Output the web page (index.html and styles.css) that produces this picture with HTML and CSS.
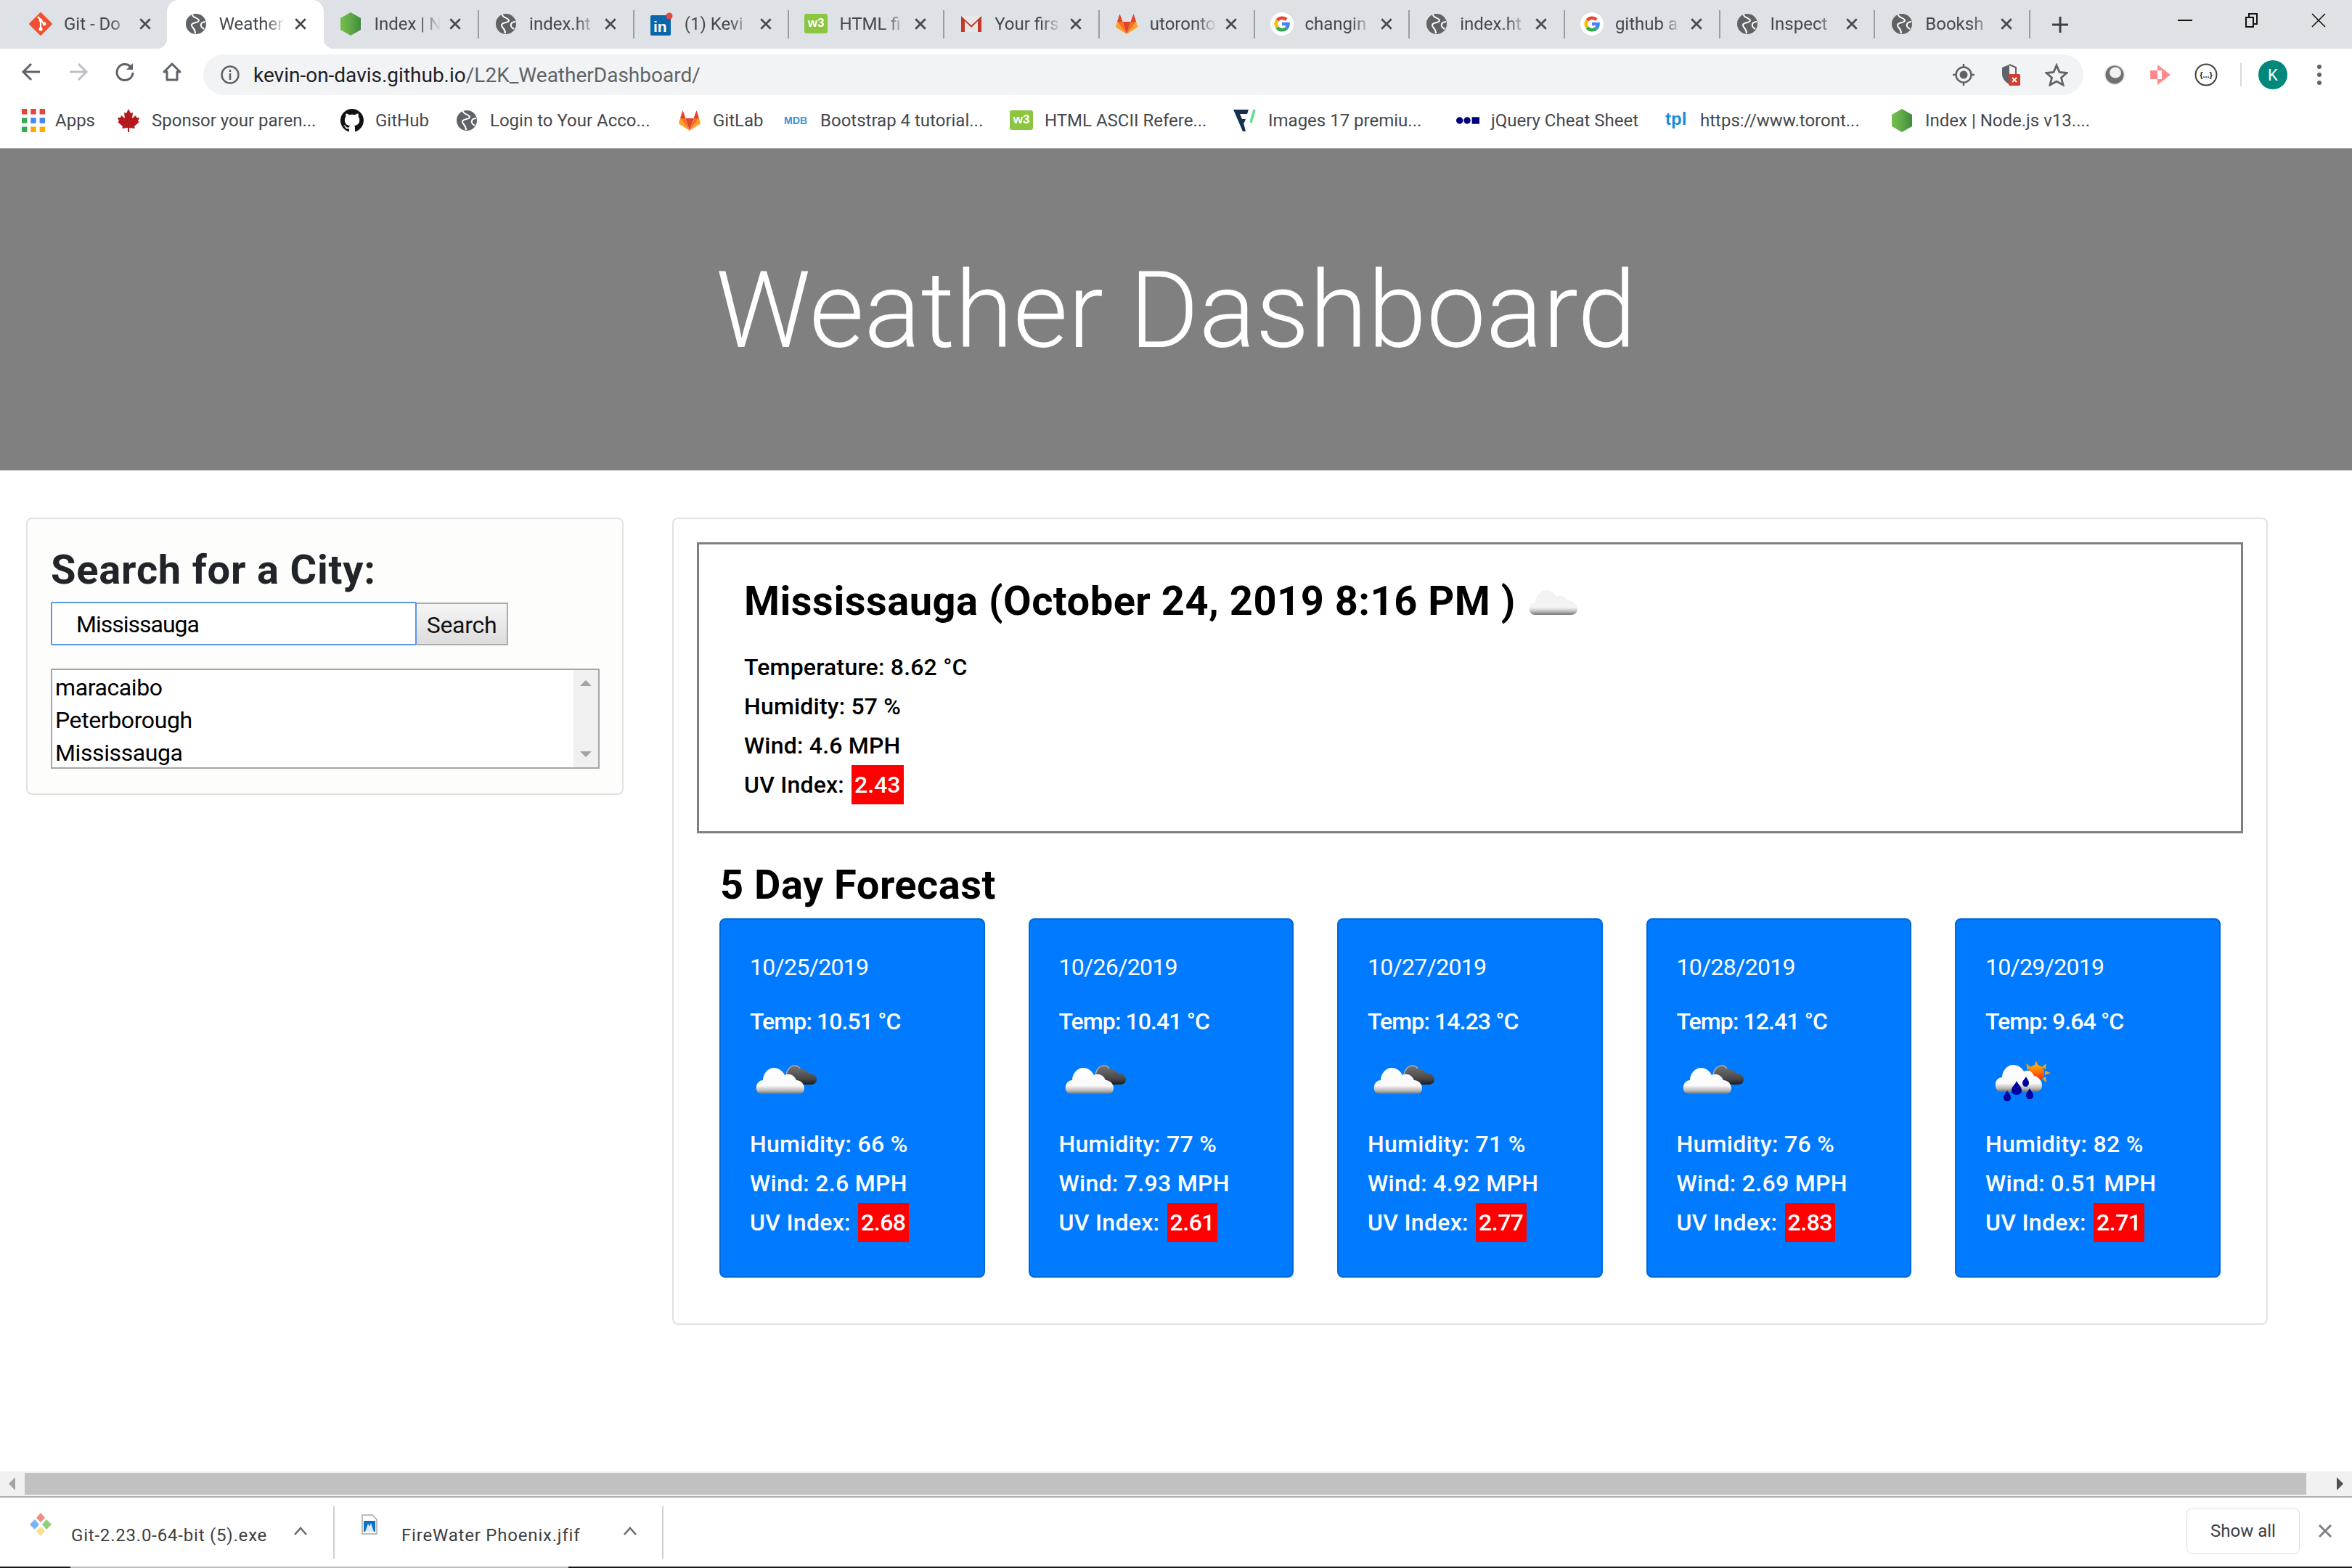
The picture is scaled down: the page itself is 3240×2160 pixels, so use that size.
FILE: index.html
```html
<!DOCTYPE html>
<html lang="en">
<head>
  <meta charset="UTF-8" />
  <title>Weather Dashboard</title>
  <link rel="stylesheet" href="styles.css">
</head>
<body>
  <svg class="sprites" xmlns="http://www.w3.org/2000/svg">
    <defs>
      <linearGradient id="white-cloud" x1="0" y1="0" x2="0" y2="1">
        <stop offset="0" stop-color="#fff" />
        <stop offset="0.68" stop-color="#fafafa" />
        <stop offset="0.88" stop-color="#b5b5b5" />
        <stop offset="1" stop-color="#6f6f6f" />
      </linearGradient>
      <linearGradient id="pale-cloud" x1="0" y1="0" x2="0" y2="1">
        <stop offset="0" stop-color="#f2f2f2" />
        <stop offset="0.7" stop-color="#f4f4f4" />
        <stop offset="0.84" stop-color="#c4c4c4" />
        <stop offset="1" stop-color="#777" />
      </linearGradient>
      <linearGradient id="dark-cloud" x1="0" y1="0" x2="0" y2="1">
        <stop offset="0" stop-color="#777" />
        <stop offset="0.7" stop-color="#484848" />
        <stop offset="1" stop-color="#1c1c1c" />
      </linearGradient>
      <linearGradient id="sun-fill" x1="0" y1="0" x2="0" y2="1">
        <stop offset="0" stop-color="#ffb000" />
        <stop offset="1" stop-color="#ff1c00" />
      </linearGradient>
      <linearGradient id="node-fill" x1="0" y1="0" x2="1" y2="0">
        <stop offset="0" stop-color="#76c04e" />
        <stop offset="0.55" stop-color="#5da646" />
        <stop offset="1" stop-color="#3c8a3c" />
      </linearGradient>
      <filter id="soft"><feGaussianBlur stdDeviation="0.7" /></filter>

      <symbol id="i-git" viewBox="0 0 32 32">
        <path d="M16 1 31 16 16 31 1 16Z" fill="#f05133" stroke="#f05133" stroke-width="2" stroke-linejoin="round" />
        <path d="M12 6 21 16M16 11V23" stroke="#fff" stroke-width="2.2" fill="none" />
        <circle cx="16" cy="23" r="2.6" fill="#fff" /><circle cx="16" cy="11" r="2.4" fill="#fff" /><circle cx="21" cy="16" r="2.4" fill="#fff" />
      </symbol>
      <symbol id="i-globe" viewBox="-2 -2 32 32">
        <circle cx="14" cy="14" r="14" fill="#5f6368" />
        <path d="M9 1C9 6 17 5 18 9 18 13 10 11 8 15 7 19 13 19 13 27M27 11C23 11 20 13 21 17 22 20 24 20 25 21" stroke="#fff" stroke-width="2" fill="none" />
      </symbol>
      <symbol id="i-node" viewBox="0 0 28 32">
        <path d="M14 0 28 8V24L14 32 0 24V8Z" fill="url(#node-fill)" />
      </symbol>
      <symbol id="i-linkedin" viewBox="0 0 32 32">
        <rect x="1" y="4" width="28" height="28" rx="2" fill="#0a66a8" />
        <text x="5" y="27" class="svg-in">in</text>
        <circle cx="27" cy="5" r="4.5" fill="#e0483f" />
      </symbol>
      <symbol id="i-w3" viewBox="0 0 32 28">
        <rect width="32" height="27" rx="3" fill="#8cc63f" />
        <text x="16" y="18" class="svg-w3">w3</text>
      </symbol>
      <symbol id="i-gmail" viewBox="0 0 32 24">
        <path d="M2 1H30V23H2Z" fill="#e8e8e8" />
        <path d="M2 1 16 14 30 1V23H25V8L16 17 7 8V23H2Z" fill="#c5392a" />
      </symbol>
      <symbol id="i-gitlab" viewBox="0 0 32 32">
        <path d="M16 30 10.5 13H21.5Z" fill="#e24329" />
        <path d="M16 30 10.5 13H3ZM16 30 21.5 13H29Z" fill="#fc6d26" />
        <path d="M3 13 1 19Q1 20.5 2 21L16 30ZM29 13 31 19Q31 20.5 30 21L16 30Z" fill="#fca326" />
        <path d="M3 13 6.5 2 10.5 13ZM29 13 25.500 2 21.500 13Z" fill="#e24329" />
      </symbol>
      <symbol id="i-google" viewBox="0 0 32 32">
        <circle cx="16" cy="16" r="16" fill="#fff" />
        <g fill="none" stroke-width="4.600">
          <path d="M9.500 11A8.500 8.500 0 0 1 22 10" stroke="#ea4335" />
          <path d="M9.500 11A8.500 8.500 0 0 0 9.500 21" stroke="#fbbc05" />
          <path d="M9.500 21A8.500 8.500 0 0 0 22 22" stroke="#34a853" />
          <path d="M22 22A8.500 8.500 0 0 0 24.500 16H16" stroke="#4285f4" />
        </g>
      </symbol>
      <symbol id="i-apps" viewBox="0 0 26 26">
        <path d="M0 0h6v6H0zM10 0h6v6h-6zM20 0h6v6h-6z" fill="#ea4335" />
        <path d="M0 10h6v6H0z" fill="#34a853" />
        <path d="M10 10h6v6h-6zM20 10h6v6h-6z" fill="#4285f4" />
        <path d="M0 20h6v6H0z" fill="#34a853" />
        <path d="M10 20h6v6h-6zM20 20h6v6h-6z" fill="#f9ab00" />
      </symbol>
      <symbol id="i-maple" viewBox="0 0 32 32">
        <path d="M16 0 19 6 22 5 21 13 26 9 27 12 31 12 29 17 31 18 24 24 25 27 17 26 17 32 15 32 15 26 7 27 8 24 1 18 3 17 1 12 5 12 6 9 11 13 10 5 13 6Z" fill="#b3191c" />
      </symbol>
      <symbol id="i-github" viewBox="0 0 16 16">
        <path fill="#111" d="M8 0C3.580 0 0 3.580 0 8c0 3.540 2.290 6.530 5.470 7.590.4.070.55-.17.55-.38 0-.19-.01-.82-.01-1.490-2.010.37-2.530-.49-2.690-.94-.09-.23-.48-.94-.82-1.130-.28-.15-.68-.52-.01-.53.63-.01 1.080.58 1.230.82.72 1.210 1.870.87 2.330.66.070-.52.28-.87.51-1.070-1.780-.2-3.640-.89-3.640-3.950 0-.87.31-1.590.82-2.150-.08-.2-.36-1.020.08-2.120 0 0 .67-.21 2.200.82.64-.18 1.320-.27 2-.27.68 0 1.360.09 2 .27 1.530-1.040 2.200-.82 2.200-.82.44 1.100.16 1.920.08 2.120.51.56.82 1.270.82 2.150 0 3.070-1.870 3.750-3.650 3.950.29.25.54.73.54 1.480 0 1.070-.01 1.930-.01 2.200 0 .21.15.46.55.38A8.013 8.013 0 0016 8c0-4.420-3.580-8-8-8z" />
      </symbol>
      <symbol id="i-f" viewBox="0 0 32 32">
        <path d="M0 1H21L19 7H9L12 14H17L15 19H14L17 31H13Z" fill="#17304d" />
        <path d="M29 1 24 19" stroke="#5ee28f" stroke-width="3.500" fill="none" />
      </symbol>
      <symbol id="i-close" viewBox="0 0 16 16">
        <path d="M2 2 14 14M14 2 2 14" stroke="#45484c" stroke-width="2.400" fill="none" />
      </symbol>
      <symbol id="i-caret" viewBox="0 0 20 14">
        <path d="M2 12 10 3 18 12" stroke="#6a6d70" stroke-width="2.600" fill="none" />
      </symbol>
    </defs>
  </svg>

  <header class="chrome">
    <div class="tabstrip">
      <div class="tab">
        <svg class="tab-icon"><use href="#i-git" /></svg>
        <span class="tab-title">Git - Do</span>
        <svg class="tab-close"><use href="#i-close" /></svg>
      </div>
      <div class="tab tab-active">
        <svg class="tab-icon"><use href="#i-globe" /></svg>
        <span class="tab-title">Weather</span>
        <svg class="tab-close"><use href="#i-close" /></svg>
      </div>
      <div class="tab tab-sep">
        <svg class="tab-icon"><use href="#i-node" /></svg>
        <span class="tab-title">Index | N</span>
        <svg class="tab-close"><use href="#i-close" /></svg>
      </div>
      <div class="tab tab-sep">
        <svg class="tab-icon"><use href="#i-globe" /></svg>
        <span class="tab-title">index.ht</span>
        <svg class="tab-close"><use href="#i-close" /></svg>
      </div>
      <div class="tab tab-sep">
        <svg class="tab-icon"><use href="#i-linkedin" /></svg>
        <span class="tab-title">(1) Kevi</span>
        <svg class="tab-close"><use href="#i-close" /></svg>
      </div>
      <div class="tab tab-sep">
        <svg class="tab-icon"><use href="#i-w3" /></svg>
        <span class="tab-title">HTML fi</span>
        <svg class="tab-close"><use href="#i-close" /></svg>
      </div>
      <div class="tab tab-sep">
        <svg class="tab-icon"><use href="#i-gmail" /></svg>
        <span class="tab-title">Your firs</span>
        <svg class="tab-close"><use href="#i-close" /></svg>
      </div>
      <div class="tab tab-sep">
        <svg class="tab-icon"><use href="#i-gitlab" /></svg>
        <span class="tab-title">utoronto</span>
        <svg class="tab-close"><use href="#i-close" /></svg>
      </div>
      <div class="tab tab-sep">
        <svg class="tab-icon"><use href="#i-google" /></svg>
        <span class="tab-title">changin</span>
        <svg class="tab-close"><use href="#i-close" /></svg>
      </div>
      <div class="tab tab-sep">
        <svg class="tab-icon"><use href="#i-globe" /></svg>
        <span class="tab-title">index.ht</span>
        <svg class="tab-close"><use href="#i-close" /></svg>
      </div>
      <div class="tab tab-sep">
        <svg class="tab-icon"><use href="#i-google" /></svg>
        <span class="tab-title">github a</span>
        <svg class="tab-close"><use href="#i-close" /></svg>
      </div>
      <div class="tab tab-sep">
        <svg class="tab-icon"><use href="#i-globe" /></svg>
        <span class="tab-title">Inspect</span>
        <svg class="tab-close"><use href="#i-close" /></svg>
      </div>
      <div class="tab tab-sep">
        <svg class="tab-icon"><use href="#i-globe" /></svg>
        <span class="tab-title">Booksh</span>
        <svg class="tab-close"><use href="#i-close" /></svg>
      </div>
      <svg class="new-tab" viewBox="0 0 24 24"><path d="M12 1V23M1 12H23" stroke="#3c4043" stroke-width="3" /></svg>
      <div class="window-controls">
        <svg class="win-btn" viewBox="0 0 20 20"><path d="M0 10H20" stroke="#111" stroke-width="2" /></svg>
        <svg class="win-btn" viewBox="0 0 20 20"><path d="M2 6H12V19H2ZM6 6V1H17V15H12" stroke="#111" stroke-width="2" fill="none" /></svg>
        <svg class="win-btn" viewBox="0 0 20 20"><path d="M1 1 19 19M19 1 1 19" stroke="#111" stroke-width="1.600" fill="none" /></svg>
      </div>
    </div>

    <div class="toolbar">
      <div class="nav-btn"><svg viewBox="0 0 28 28"><path d="M26 14H4M14 3 3 14 14 25" stroke="#5f6368" stroke-width="3" fill="none" /></svg></div>
      <div class="nav-btn"><svg viewBox="0 0 28 28"><path d="M2 14H24M14 3 25 14 14 25" stroke="#bdc1c6" stroke-width="3" fill="none" /></svg></div>
      <div class="nav-btn"><svg viewBox="0 0 28 28"><path d="M22 7A11 11 0 1 0 25 15" stroke="#5f6368" stroke-width="3" fill="none" /><path d="M25 2V11H16Z" fill="#5f6368" /></svg></div>
      <div class="nav-btn"><svg viewBox="0 0 28 28"><path d="M14 3 3 14H7V25H21V14H25Z" stroke="#5f6368" stroke-width="3" fill="none" stroke-linejoin="round" /></svg></div>
      <div class="omnibox">
        <svg class="omni-info" viewBox="0 0 26 26"><circle cx="13" cy="13" r="11.500" stroke="#5f6368" stroke-width="2.500" fill="none" /><path d="M13 11V20M13 6V9" stroke="#5f6368" stroke-width="2.500" /></svg>
        <span class="url">kevin-on-davis.github.io<span class="url-path">/L2K_WeatherDashboard/</span></span>
        <div class="omni-actions">
          <svg viewBox="0 0 32 32"><circle cx="16" cy="16" r="10.500" stroke="#5f6368" stroke-width="2.500" fill="none" /><circle cx="16" cy="16" r="5.500" fill="#5f6368" /><path d="M16 1V6M16 26V31M1 16H6M26 16H31" stroke="#5f6368" stroke-width="2.500" /></svg>
          <svg viewBox="0 0 32 32"><path d="M15 2 5 6V15C5 21 9 26 15 29Z" fill="#5f6368" /><path d="M15 2 24 6V15" stroke="#5f6368" stroke-width="2" fill="none" /><rect x="14" y="15" width="16" height="16" rx="2" fill="#d93a2f" /><path d="M19 20 25 26M25 20 19 26" stroke="#fff" stroke-width="2" /></svg>
          <svg viewBox="0 0 32 32"><path d="M16 3 20 12.500 30 13.500 22.500 20 25 30 16 25 7 30 9.500 20 2 13.500 12 12.500Z" stroke="#5f6368" stroke-width="2.800" fill="none" /></svg>
        </div>
      </div>
      <div class="extensions">
        <svg viewBox="0 0 32 32"><circle cx="16" cy="16" r="14" fill="#e4e4e4" /><circle cx="16" cy="16" r="12.500" fill="#707070" /><ellipse cx="17" cy="13" rx="8" ry="7.500" fill="#f2f2f2" /></svg>
        <svg viewBox="0 0 32 32"><path d="M2 10H12V2L30 16 12 30V22H2Z" fill="#ff8a8e" /><path d="M12 10H18V22H12Z" fill="#fff" /></svg>
        <svg viewBox="0 0 32 32"><circle cx="16" cy="16" r="14.500" stroke="#3c4043" stroke-width="2" fill="#fff" /><text x="16" y="20" class="svg-braces">{...}</text></svg>
      </div>
      <span class="toolbar-sep"></span>
      <span class="avatar">K</span>
      <svg class="menu-dots" viewBox="0 0 28 28"><circle cx="14" cy="3" r="3" fill="#5f6368" /><circle cx="14" cy="14" r="3" fill="#5f6368" /><circle cx="14" cy="25" r="3" fill="#5f6368" /></svg>
    </div>

    <nav class="bookmarks">
      <div class="bm bm-apps"><svg class="bm-icon"><use href="#i-apps" /></svg><span>Apps</span></div>
      <div class="bm"><svg class="bm-icon"><use href="#i-maple" /></svg><span>Sponsor your paren...</span></div>
      <div class="bm"><svg class="bm-icon"><use href="#i-github" /></svg><span>GitHub</span></div>
      <div class="bm"><svg class="bm-icon"><use href="#i-globe" /></svg><span>Login to Your Acco...</span></div>
      <div class="bm"><svg class="bm-icon"><use href="#i-gitlab" /></svg><span>GitLab</span></div>
      <div class="bm bm-mdb"><svg class="bm-icon" viewBox="0 0 34 14"><text x="0" y="12" class="svg-mdb">MDB</text></svg><span>Bootstrap 4 tutorial...</span></div>
      <div class="bm"><svg class="bm-icon"><use href="#i-w3" /></svg><span>HTML ASCII Refere...</span></div>
      <div class="bm"><svg class="bm-icon"><use href="#i-f" /></svg><span>Images 17 premiu...</span></div>
      <div class="bm"><svg class="bm-icon" viewBox="0 0 34 14"><circle cx="5" cy="7" r="5" fill="#00007f" /><circle cx="16" cy="7" r="5" fill="#00007f" /><rect x="23" y="2" width="11" height="10" fill="#00007f" /></svg><span>jQuery Cheat Sheet</span></div>
      <div class="bm"><svg class="bm-icon" viewBox="0 0 32 28"><text x="0" y="20" class="svg-tpl">tpl</text></svg><span>https://www.toront...</span></div>
      <div class="bm"><svg class="bm-icon"><use href="#i-node" /></svg><span>Index | Node.js v13....</span></div>
    </nav>
  </header>

  <main class="page">
    <div class="jumbotron">
      <h1>Weather Dashboard</h1>
    </div>

    <div class="content">
      <section class="search-card">
        <h3>Search for a City:</h3>
        <form class="search-form">
          <input class="search-input" type="text" value="Mississauga" />
          <button class="search-btn" type="button">Search</button>
        </form>
        <div class="city-list">
          <ul>
            <li>maracaibo</li>
            <li>Peterborough</li>
            <li>Mississauga</li>
          </ul>
          <div class="list-scroll"><span class="arrow-up"></span><span class="arrow-down"></span></div>
        </div>
      </section>

      <section class="weather-card">
        <div class="current">
          <h2>Mississauga (October 24, 2019 8:16 PM ) <svg class="current-icon" viewBox="0 0 68 38"><path filter="url(#soft)" fill="url(#pale-cloud)" d="M9 37C3 37 0 32 1 27 2 22 5 20 9 20 10 11 16 3 24 3 31 3 36 8 38 12 43 9 50 10 53 17 60 17 67 21 67 29 67 34 63 37 58 37Z" /></svg></h2>
          <p>Temperature: 8.62 °C</p>
          <p>Humidity: 57 %</p>
          <p>Wind: 4.6 MPH</p>
          <p>UV Index: <span class="uv">2.43</span></p>
        </div>

        <h2 class="forecast-title">5 Day Forecast</h2>
        <div class="forecast">
          <div class="day">
            <div class="day-date">10/25/2019</div>
            <p class="day-temp">Temp: 10.51 °C</p>
            <svg class="day-icon"><use href="#w-clouds" /></svg>
            <p>Humidity: 66 %</p>
            <p>Wind: 2.6 MPH</p>
            <p>UV Index: <span class="uv">2.68</span></p>
          </div>
          <div class="day">
            <div class="day-date">10/26/2019</div>
            <p class="day-temp">Temp: 10.41 °C</p>
            <svg class="day-icon"><use href="#w-clouds" /></svg>
            <p>Humidity: 77 %</p>
            <p>Wind: 7.93 MPH</p>
            <p>UV Index: <span class="uv">2.61</span></p>
          </div>
          <div class="day">
            <div class="day-date">10/27/2019</div>
            <p class="day-temp">Temp: 14.23 °C</p>
            <svg class="day-icon"><use href="#w-clouds" /></svg>
            <p>Humidity: 71 %</p>
            <p>Wind: 4.92 MPH</p>
            <p>UV Index: <span class="uv">2.77</span></p>
          </div>
          <div class="day">
            <div class="day-date">10/28/2019</div>
            <p class="day-temp">Temp: 12.41 °C</p>
            <svg class="day-icon"><use href="#w-clouds" /></svg>
            <p>Humidity: 76 %</p>
            <p>Wind: 2.69 MPH</p>
            <p>UV Index: <span class="uv">2.83</span></p>
          </div>
          <div class="day">
            <div class="day-date">10/29/2019</div>
            <p class="day-temp">Temp: 9.64 °C</p>
            <svg class="day-icon"><use href="#w-rain" /></svg>
            <p>Humidity: 82 %</p>
            <p>Wind: 0.51 MPH</p>
            <p>UV Index: <span class="uv">2.71</span></p>
          </div>
        </div>
      </section>
    </div>
  </main>

  <svg class="sprites" xmlns="http://www.w3.org/2000/svg">
    <defs>
      <symbol id="w-clouds" viewBox="0 0 100 100">
        <path filter="url(#soft)" fill="url(#dark-cloud)" d="M50 46C50 36 56 30 62 30 66 30 70 33 71 37 76 36 80 38 81 42 85 41 92 44 92 50 92 55 88 57 84 57H60Z" />
        <path filter="url(#soft)" d="M50 44C51 36 56 31 62 31 65 31 67 32 69 35" stroke="#a8a8a8" stroke-width="1.600" fill="none" />
        <path filter="url(#soft)" fill="url(#white-cloud)" d="M17 70C10 70 8 64 9 59 10 54 14 51 18 51 18 42 25 34 33 34 41 34 46 40 48 44 53 41 61 43 64 51 70 51 75 56 75 62 75 67 72 70 68 70Z" />
      </symbol>
      <symbol id="w-rain" viewBox="0 0 100 100">
        <g fill="#f0a020">
          <path d="M70 24 73 32H67ZM56 28 63 33 58 37ZM84 28 83 36 77 33ZM90 41 82 44V38ZM84 54 78 49 83 46Z" />
        </g>
        <circle cx="70" cy="41" r="11" fill="url(#sun-fill)" />
        <path filter="url(#soft)" fill="url(#white-cloud)" d="M22 67C15 67 13 60 14 55 15 50 19 47 23 47 23 38 30 30 38 30 46 30 51 35 53 39 58 36 64 38 67 45 73 46 78 52 78 58 78 64 74 67 70 67Z" />
        <circle cx="56" cy="53" r="7" fill="#fff" />
        <g fill="#00009c" filter="url(#soft)">
          <path d="M43 52C45 57 50 60 50 65 50 69 47 71 43 71 39 71 36 69 36 65 36 60 41 57 43 52Z" />
          <path d="M56 46C57 49 60 51 60 55 60 58 58 60 56 60 53 60 51 58 51 55 51 51 55 49 56 46Z" />
          <path d="M30 65C31 68 35 71 35 75 35 78 33 80 30 80 27 80 25 78 25 75 25 71 29 68 30 65Z" />
          <path d="M61 62C62 65 66 68 66 72 66 75 64 77 61 77 58 77 56 75 56 72 56 68 60 65 61 62Z" />
        </g>
      </symbol>
    </defs>
  </svg>

  <div class="hscroll">
    <span class="arrow-left"></span>
    <div class="hscroll-thumb"></div>
    <span class="arrow-right"></span>
  </div>

  <footer class="shelf">
    <div class="dl dl-first">
      <svg class="dl-icon" viewBox="0 0 32 32">
        <path d="M16 0 22 7 16 13 10 7Z" fill="#f28b82" />
        <path d="M8 9 14 16 8 23 1 16Z" fill="#7cb2f5" />
        <path d="M24 9 31 16 24 23 18 16Z" fill="#8fd07a" />
        <path d="M16 19 22 25 16 32 10 25Z" fill="#fde08a" />
      </svg>
      <span class="dl-name">Git-2.23.0-64-bit (5).exe</span>
      <svg class="dl-caret"><use href="#i-caret" /></svg>
    </div>
    <div class="dl dl-second">
      <svg class="dl-file" viewBox="0 0 22 28">
        <path d="M1 1H15L21 7V27H1Z" fill="#fff" stroke="#a8a8a8" stroke-width="1.500" />
        <path d="M3 9H19V24H3Z" fill="#0b70c9" />
        <path d="M5 24 9 13 11 17 13 12 17 24Z" fill="#dcecf9" />
      </svg>
      <span class="dl-name">FireWater Phoenix.jfif</span>
      <svg class="dl-caret"><use href="#i-caret" /></svg>
    </div>
    <div class="shelf-end">
      <button class="show-all" type="button">Show all</button>
      <svg class="shelf-close" viewBox="0 0 20 20"><path d="M2 2 18 18M18 2 2 18" stroke="#7b7e82" stroke-width="3" fill="none" /></svg>
    </div>
  </footer>
  <div class="taskbar-edge"><span class="taskbar-gap"></span></div>
</body>
</html>
```

FILE: styles.css
```css
* {
  box-sizing: border-box;
}
html, body {
  height: 100%;
}
body {
  margin: 0;
  width: 3240px;
  height: 2160px;
  overflow: hidden;
  display: flex;
  flex-direction: column;
  background: #fff;
  color: #000;
  font-family: Roboto, "Noto Sans", sans-serif;
}
.sprites {
  position: absolute;
  width: 0;
  height: 0;
}
.svg-in {
  font: 700 21px "Liberation Sans", sans-serif;
  fill: #fff;
}
.svg-w3 {
  font: 700 17px "Liberation Sans", sans-serif;
  fill: #fff;
  text-anchor: middle;
}
.svg-mdb {
  font: 700 15px "Liberation Sans", sans-serif;
  fill: #3f8fd8;
}
.svg-tpl {
  font: 700 24px "Liberation Sans", sans-serif;
  fill: #1b8bdc;
}
.svg-braces {
  font: 700 11px "Liberation Sans", sans-serif;
  fill: #222;
  text-anchor: middle;
}

/* browser chrome */
.chrome {
  flex: none;
  border-bottom: 1px solid #a9a9a9;
}
.tabstrip {
  height: 67px;
  padding-left: 19px;
  display: flex;
  align-items: stretch;
  background: #dee1e6;
}
.tab {
  position: relative;
  flex: none;
  width: 213.7px;
  display: flex;
  align-items: center;
  padding: 0 0 2px 21px;
  font-size: 24px;
  color: #45484c;
}
.tab-sep::after {
  content: "";
  position: absolute;
  right: 0;
  top: 14px;
  height: 39px;
  width: 2px;
  background: #9a9da1;
}
.tab-active {
  background: #fff;
  border-radius: 16px 16px 0 0;
  margin-left: -3px;
  width: 216.700px;
  padding-left: 24px;
}
.tab-active::before,
.tab-active::after {
  content: "";
  position: absolute;
  bottom: 0;
  width: 14px;
  height: 14px;
}
.tab-active::before {
  left: -14px;
  background: radial-gradient(circle at 0 0, transparent 14px, #fff 14.500px);
}
.tab-active::after {
  right: -14px;
  background: radial-gradient(circle at 100% 0, transparent 14px, #fff 14.500px);
}
.tab-icon {
  flex: none;
  width: 32px;
  height: 32px;
}
.tab-title {
  flex: none;
  width: 92px;
  margin-left: 16px;
  overflow: hidden;
  white-space: nowrap;
  -webkit-mask-image: linear-gradient(to right, #000 70%, transparent 100%);
  mask-image: linear-gradient(to right, #000 70%, transparent 100%);
}
.tab-close {
  flex: none;
  width: 18px;
  height: 18px;
  margin-left: 11px;
}
.new-tab {
  flex: none;
  align-self: center;
  width: 24px;
  height: 24px;
  margin-left: 29px;
}
.window-controls {
  margin-left: auto;
  display: flex;
  gap: 72px;
  padding: 18px 36px 0 0;
}
.win-btn {
  width: 20px;
  height: 20px;
}
.toolbar {
  height: 64px;
  padding-left: 11px;
  display: flex;
  align-items: center;
  background: #fff;
}
.nav-btn {
  flex: none;
  width: 64.500px;
  display: flex;
  justify-content: center;
}
.nav-btn svg {
  width: 28px;
  height: 28px;
}
.omnibox {
  flex: none;
  width: 2590px;
  height: 56px;
  margin: 8px 0 0 11px;
  padding: 0 21px 0 24px;
  display: flex;
  align-items: center;
  border-radius: 28px;
  background: #f1f3f4;
}
.omni-info {
  width: 26px;
  height: 26px;
}
.url {
  margin-left: 19px;
  font-size: 28px;
  color: #202124;
  white-space: nowrap;
}
.url-path {
  color: #5f6368;
}
.omni-actions {
  margin-left: auto;
  display: flex;
  gap: 32px;
}
.omni-actions svg,
.extensions svg {
  width: 32px;
  height: 32px;
}
.extensions {
  margin: 8px 0 0 27px;
  display: flex;
  gap: 31px;
}
.toolbar-sep {
  flex: none;
  width: 2px;
  height: 32px;
  margin: 8px 0 0 31px;
  background: #d8dadd;
}
.avatar {
  flex: none;
  width: 40px;
  height: 40px;
  margin: 8px 0 0 23px;
  border-radius: 50%;
  display: flex;
  align-items: center;
  justify-content: center;
  background: #00897b;
  color: #fff;
  font-size: 22px;
}
.menu-dots {
  flex: none;
  width: 28px;
  height: 28px;
  margin: 8px 0 0 30px;
}
.bookmarks {
  height: 73px;
  padding: 0 0 3px 30px;
  display: grid;
  grid-template-columns: 131px 308px 158px 307px 146px 311px 308px 307px 288px 310px auto;
  align-items: center;
  background: #fff;
  font-size: 24px;
  color: #45484c;
}
.bm {
  display: flex;
  align-items: center;
  gap: 16px;
  white-space: nowrap;
}
.bm-apps {
  gap: 14px;
}
.bm-mdb {
  gap: 18px;
}
.bm-icon {
  flex: none;
  width: 32px;
  height: 32px;
}

/* page */
.page {
  flex: 1;
  min-height: 0;
  overflow: hidden;
}
.jumbotron {
  height: 443px;
  padding-top: 4px;
  display: flex;
  align-items: center;
  justify-content: center;
  background: #808080;
  color: #fff;
}
h1 {
  margin: 0;
  font-size: 146px;
  font-weight: 300;
  line-height: 1.2;
}
.content {
  display: flex;
  align-items: flex-start;
  gap: 67px;
  padding: 65px 0 0 36px;
}
.search-card {
  flex: none;
  width: 823px;
  height: 382px;
  padding: 37px 32px 0;
  border: 2px solid #e2e2e2;
  border-radius: 8px;
  background: #fdfdfb;
}
h3 {
  margin: 0 0 10px;
  font-size: 56px;
  font-weight: 700;
  letter-spacing: 0.8px;
  line-height: 1.2;
  color: #212529;
}
.search-form {
  display: flex;
  align-items: center;
}
.search-input {
  width: 504px;
  height: 60px;
  padding: 2px 0 0 33px;
  border: 2px solid #5b94ee;
  border-radius: 2px;
  outline: none;
  font: 32px Roboto, sans-serif;
  letter-spacing: -1px;
  color: #000;
  background: #fff;
}
.search-btn {
  width: 126px;
  height: 59px;
  padding: 3px 0 0;
  border: 2px solid #acacac;
  border-left: 0;
  background: linear-gradient(#f6f6f6, #dcdcdc);
  font: 32px Roboto, sans-serif;
  letter-spacing: -0.3px;
  color: #111;
}
.city-list {
  width: 756px;
  height: 138px;
  margin-top: 32px;
  display: flex;
  border: 2px solid #a6a6a6;
  background: #fff;
}
.city-list ul {
  flex: 1;
  margin: 0;
  padding: 2px 4px 0;
  list-style: none;
  font-size: 32px;
  letter-spacing: -0.4px;
  line-height: 45px;
}
.list-scroll {
  flex: none;
  position: relative;
  width: 34px;
  background: #f0f0f0;
}
.arrow-up,
.arrow-down {
  position: absolute;
  left: 9px;
  border-left: 8px solid transparent;
  border-right: 8px solid transparent;
}
.arrow-up {
  top: 14px;
  border-bottom: 8px solid #a3a3a3;
}
.arrow-down {
  bottom: 14px;
  border-top: 8px solid #a3a3a3;
}
.weather-card {
  flex: none;
  width: 2198px;
  height: 1112px;
  padding: 32px;
  border: 2px solid #e2e2e2;
  border-radius: 8px;
  background: #fff;
}
h2 {
  margin: 0;
  font-size: 56px;
  font-weight: 700;
  letter-spacing: 0.5px;
  line-height: 1.2;
}
p {
  margin: 0;
  font-size: 32px;
  font-weight: 500;
  letter-spacing: 0.2px;
  line-height: 54px;
}
.current {
  height: 401px;
  padding: 45px 0 0 62px;
  border: 3px solid #808080;
}
.current h2 {
  margin-bottom: 30px;
  white-space: nowrap;
}
.current-icon {
  width: 68px;
  height: 38px;
  margin-left: 4px;
  vertical-align: -1px;
}
.uv {
  display: inline-block;
  margin-left: 2px;
  padding: 0 4px;
  background: #f00;
  color: #fff;
  letter-spacing: 0;
  line-height: 54px;
}
.forecast-title {
  margin: 38px 0 12px 32px;
}
.forecast {
  display: flex;
  gap: 60px;
  padding-left: 31px;
}
.day {
  flex: none;
  width: 365.500px;
  height: 495px;
  padding: 41px 0 0 40px;
  border: 2px solid #0069d9;
  border-radius: 8px;
  background: #007bff;
  color: #fff;
}
.day p {
  letter-spacing: 0.3px;
}
.day-date {
  height: 48px;
  margin-bottom: 24px;
  font-size: 32px;
  letter-spacing: -0.7px;
  line-height: 48px;
}
.day .day-temp {
  letter-spacing: -0.9px;
}
.day .uv {
  letter-spacing: -0.5px;
}
.day-icon {
  display: block;
  width: 100px;
  height: 100px;
  margin: 3px 0 12px;
}

/* bottom bars */
.hscroll {
  flex: none;
  position: relative;
  height: 36px;
  padding: 2px 63px 2px 34px;
  border-bottom: 2px solid #b0b0b0;
  background: #f1f1f1;
}
.hscroll-thumb {
  height: 30px;
  background: #c1c1c1;
}
.arrow-left,
.arrow-right {
  position: absolute;
  top: 8px;
  border-top: 9px solid transparent;
  border-bottom: 9px solid transparent;
}
.arrow-left {
  left: 12px;
  border-right: 9px solid #a3a3a3;
}
.arrow-right {
  right: 12px;
  border-left: 9px solid #505050;
}
.shelf {
  flex: none;
  height: 95px;
  display: flex;
  align-items: center;
  background: #fff;
  font-size: 24px;
  color: #3c4043;
}
.dl {
  flex: none;
  height: 72px;
  display: flex;
  align-items: center;
  border-right: 2px solid #cfcfcf;
}
.dl-first {
  width: 461px;
  padding-left: 40px;
}
.dl-second {
  width: 453px;
  padding-left: 37px;
}
.dl-icon {
  flex: none;
  width: 32px;
  height: 32px;
  margin: -22px 26px 0 0;
}
.dl-file {
  flex: none;
  width: 22px;
  height: 28px;
  margin: -22px 33px 0 0;
}
.dl-name {
  flex: none;
  width: 272px;
  white-space: nowrap;
  letter-spacing: 0.8px;
  margin-top: 8px;
}
.dl-second .dl-name {
  width: 242px;
}
.dl-caret {
  flex: none;
  width: 20px;
  height: 14px;
  margin: -4px 0 0 34px;
}
.dl-second .dl-caret {
  margin-left: 63px;
}
.shelf-end {
  margin-left: auto;
  display: flex;
  align-items: center;
  padding: 0 27px 3px 0;
}
.show-all {
  width: 156px;
  height: 64px;
  padding: 0;
  border: 1px solid #dadce0;
  border-radius: 8px;
  background: #fff;
  font: 24px Roboto, sans-serif;
  color: #3c4043;
}
.shelf-close {
  width: 20px;
  height: 20px;
  margin-left: 25px;
}
.taskbar-edge {
  flex: none;
  height: 2px;
  padding-left: 97px;
  background: #1a1a1a;
}
.taskbar-gap {
  display: block;
  width: 686px;
  height: 2px;
  background: #bdbdbd;
}
```
